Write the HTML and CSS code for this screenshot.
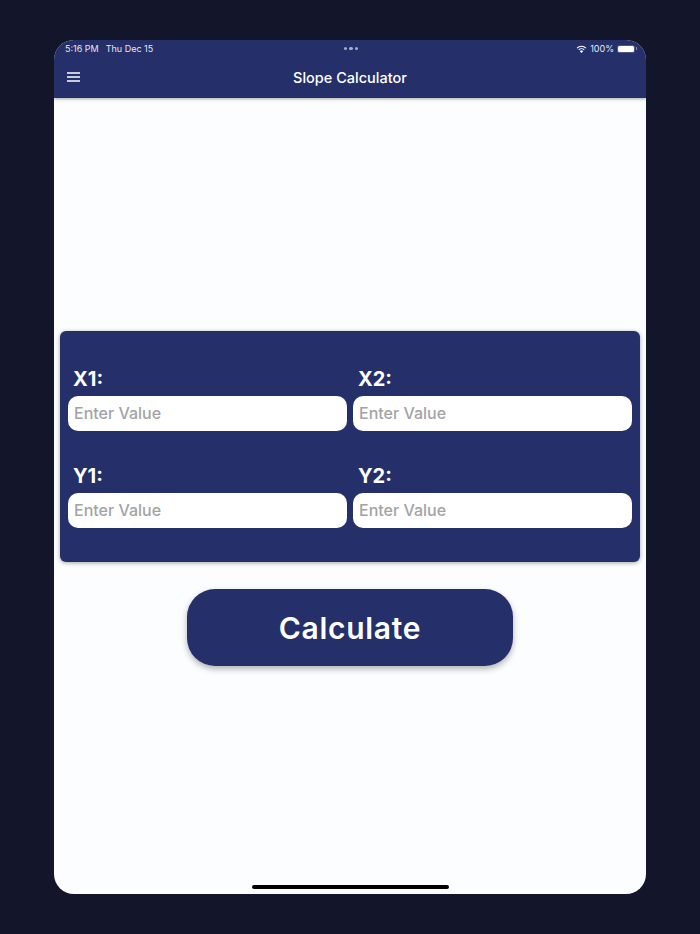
FILE: index.html
```html
<!DOCTYPE html>
<html lang="en">
<head>
    <meta charset="UTF-8">
    <meta name="viewport" content="width=device-width, initial-scale=1.0">
    <title>Slope Calculator</title>
    <link rel="stylesheet" href="styles.css">
</head>
<body>
    <div class="device">
        <div class="app-header">
            <div class="status-bar">
                <div class="status-left">
                    <span>5:16 PM</span>
                    <span>Thu Dec 15</span>
                </div>
                <div class="status-dots"><i></i><i></i><i></i></div>
                <div class="status-right">
                    <svg class="wifi" viewBox="0 0 12 9" width="11" height="8">
                        <path d="M6 9 4.2 6.9a2.6 2.6 0 0 1 3.6 0z" fill="#fff"/>
                        <path d="M2.9 5.5a4.4 4.4 0 0 1 6.2 0" fill="none" stroke="#fff" stroke-width="1.2"/>
                        <path d="M1 3.4a7.1 7.1 0 0 1 10 0" fill="none" stroke="#fff" stroke-width="1.2"/>
                    </svg>
                    <span>100%</span>
                    <div class="battery"><div class="battery-fill"></div></div>
                    <div class="battery-cap"></div>
                </div>
            </div>
            <div class="toolbar">
                <svg class="menu-icon" viewBox="0 0 13 10" width="13" height="10">
                    <path d="M0 1h13M0 5h13M0 9h13" stroke="#fff" stroke-width="1.4"/>
                </svg>
                <div class="title">Slope Calculator</div>
            </div>
        </div>

        <div class="content">
            <div class="panel">
                <div class="field">
                    <label class="field-label">X1:</label>
                    <input class="field-input" type="text" placeholder="Enter Value">
                </div>
                <div class="field">
                    <label class="field-label">X2:</label>
                    <input class="field-input" type="text" placeholder="Enter Value">
                </div>
                <div class="field">
                    <label class="field-label">Y1:</label>
                    <input class="field-input" type="text" placeholder="Enter Value">
                </div>
                <div class="field">
                    <label class="field-label">Y2:</label>
                    <input class="field-input" type="text" placeholder="Enter Value">
                </div>
            </div>
            <button class="calc-button">Calculate</button>
        </div>

        <div class="home-indicator"></div>
    </div>
</body>
</html>
```

FILE: styles.css
```css
html, body {
    height: 100%;
}
body {
    font-family: Inter, "Liberation Sans", sans-serif;
    margin: 0;
    padding: 40px 54px;
    box-sizing: border-box;
    background-color: #13162b;
    overflow: hidden;
}
.device {
    position: relative;
    height: 854px;
    border-radius: 20px;
    background-color: #fcfdff;
    overflow: hidden;
    display: flex;
    flex-direction: column;
}
.app-header {
    height: 58px;
    background-color: #252f69;
    box-shadow: 0 1px 3px rgba(0, 0, 0, 0.35);
    color: white;
    flex-shrink: 0;
}
.status-bar {
    height: 17px;
    padding: 0 9px 0 11px;
    display: flex;
    align-items: center;
    font-size: 9px;
    color: #e4e6f0;
}
.status-left {
    flex: 1;
    display: flex;
    gap: 7px;
}
.status-dots {
    display: flex;
    gap: 2px;
}
.status-dots i {
    width: 3.5px;
    height: 3.5px;
    border-radius: 50%;
    background-color: #a4aad0;
}
.status-right {
    flex: 1;
    display: flex;
    align-items: center;
    justify-content: flex-end;
    gap: 2px;
}
.wifi {
    margin-right: 1px;
}
.battery {
    width: 18px;
    height: 8px;
    margin-left: 1px;
    padding: 1px;
    box-sizing: border-box;
    border-radius: 2.5px;
    background-color: #4d5589;
}
.battery-fill {
    height: 100%;
    border-radius: 1.5px;
    background-color: white;
}
.battery-cap {
    width: 1px;
    height: 3px;
    margin-left: -1px;
    background-color: #7f86b0;
}
.toolbar {
    position: relative;
    height: 41px;
    display: flex;
    align-items: center;
    justify-content: center;
}
.menu-icon {
    position: absolute;
    left: 13px;
    top: 15px;
}
.title {
    font-size: 14.5px;
    font-weight: 500;
}
.content {
    flex-grow: 1;
    padding: 233px 6px 0;
    display: flex;
    flex-direction: column;
    align-items: center;
}
.panel {
    width: 100%;
    height: 231px;
    padding: 35px 8px 0;
    box-sizing: border-box;
    background-color: #252f69;
    border-radius: 6px;
    box-shadow: 0 1px 4px rgba(0, 0, 0, 0.35);
    display: grid;
    grid-template-columns: 1fr 1fr;
    grid-auto-rows: 65px;
    column-gap: 6px;
    row-gap: 32px;
}
.field {
    display: flex;
    flex-direction: column;
}
.field-label {
    height: 30px;
    padding: 0 0 5px 5px;
    box-sizing: border-box;
    display: flex;
    align-items: center;
    font-size: 20px;
    font-weight: 700;
    color: white;
}
.field-input {
    width: 100%;
    height: 35px;
    padding: 0 6px 2px;
    box-sizing: border-box;
    border: none;
    border-radius: 10px;
    background-color: white;
    font-family: inherit;
    font-size: 16px;
    font-weight: 500;
}
.field-input::placeholder {
    color: #a3a3a6;
    opacity: 1;
}
.calc-button {
    width: 326px;
    height: 77px;
    margin-top: 27px;
    border: none;
    border-radius: 28px;
    background-color: #252f69;
    box-shadow: 0 3px 6px rgba(0, 0, 0, 0.3);
    color: white;
    font-family: inherit;
    font-size: 30px;
    font-weight: 600;
    letter-spacing: 0.7px;
}
.home-indicator {
    position: absolute;
    left: 198px;
    bottom: 5px;
    width: 197px;
    height: 4px;
    border-radius: 2px;
    background-color: black;
}
```
